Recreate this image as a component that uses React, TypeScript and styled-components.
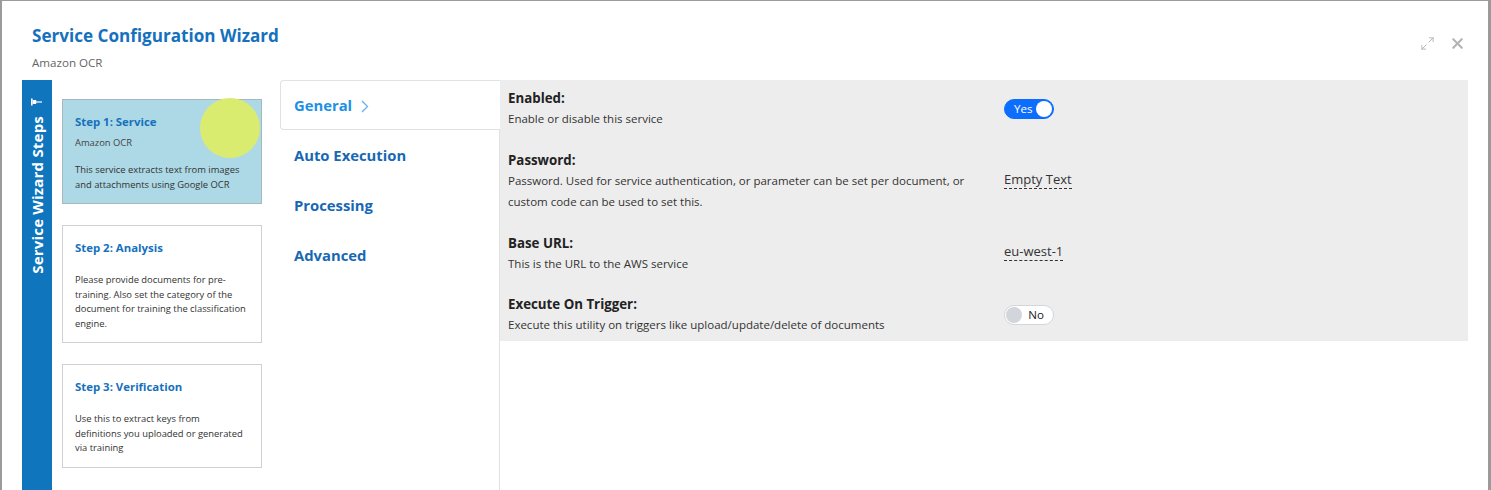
import React from "react";
import styled, { createGlobalStyle } from "styled-components";
import { Maximize2, X } from "lucide-react";

const GlobalStyle = createGlobalStyle`
    html, body {
        margin: 0;
        padding: 0;
        background: #9b9b9b;
    }
    body {
        font-family: "Open Sans", "Noto Sans", sans-serif;
        color: #333;
    }
`;

const Backdrop = styled.div`
    height: 490px;
    padding: 1px 3px 0 2px;
    box-sizing: border-box;
    overflow: hidden;
`;

const Modal = styled.div`
    position: relative;
    background: #fff;
    height: 100%;
    display: flex;
    flex-direction: column;
`;

const Header = styled.div`
    padding: 22px 30px 0;
    height: 79px;
    box-sizing: border-box;
`;

const Title = styled.h1`
    margin: 0;
    font-size: 17.1px;
    line-height: 26px;
    font-weight: 700;
    color: #1571bd;
`;

const Subtitle = styled.div`
    margin-top: 6px;
    font-size: 11.6px;
    line-height: 16px;
    color: #666;
`;

const HeaderTools = styled.div`
    position: absolute;
    top: 34px;
    right: 22px;
    display: flex;
    align-items: center;
    gap: 14px;
    color: #b4b4b4;
`;

const Body = styled.div`
    flex: 1;
    display: flex;
    padding-left: 20px;
    padding-right: 20px;
    min-height: 0;
`;

const StepsBar = styled.div`
    width: 30px;
    background: #0f75bc;
    display: flex;
    flex-direction: column;
    align-items: center;
    padding-top: 18px;
    gap: 10px;
    box-sizing: border-box;
`;

const StepsBarLabel = styled.div`
    writing-mode: vertical-rl;
    transform: rotate(180deg);
    color: #fff;
    font-weight: 700;
    font-size: 15px;
    letter-spacing: 0.2px;
`;

const StepsList = styled.div`
    width: 200px;
    margin-left: 10px;
    margin-right: 18px;
    padding-top: 19px;
    display: flex;
    flex-direction: column;
    gap: 21px;
`;

const StepCard = styled.div<{ $active?: boolean }>`
    position: relative;
    border: 1px solid ${(p) => (p.$active ? "#a9b8c0" : "#d0d0d0")};
    background: ${(p) => (p.$active ? "#add8e6" : "#fff")};
    padding: 14px 14px 11px 12px;
`;

const ClickMark = styled.div`
    position: absolute;
    left: 137px;
    top: -2px;
    width: 60px;
    height: 60px;
    border-radius: 50%;
    background: #d9ec70;
`;

const StepTitle = styled.div`
    position: relative;
    font-size: 11.4px;
    line-height: 16px;
    font-weight: 700;
    color: #1571bd;
`;

const StepSub = styled.div`
    position: relative;
    margin-top: 6px;
    font-size: 9.4px;
    line-height: 14px;
    color: #444;
`;

const StepText = styled.div<{ $gap: number }>`
    position: relative;
    margin-top: ${(p) => p.$gap}px;
    font-size: 9.4px;
    line-height: 14.5px;
    color: #333;
`;

const Tabs = styled.div`
    width: 220px;
    border-right: 1px solid #e2e2e2;
    box-sizing: border-box;
    display: flex;
    flex-direction: column;
`;

const Tab = styled.div<{ $active?: boolean }>`
    height: 50px;
    display: flex;
    align-items: center;
    gap: 9px;
    padding-left: 13px;
    box-sizing: border-box;
    font-size: 14.8px;
    font-weight: 700;
    color: ${(p) => (p.$active ? "#2090e6" : "#1768b4")};
    border: 1px solid ${(p) => (p.$active ? "#dfe1e5" : "transparent")};
    border-right: none;
    border-radius: 4px 0 0 4px;
    background: #fff;
    margin-right: ${(p) => (p.$active ? "-1px" : "0")};
`;

const Chevron = styled.svg`
    width: 8px;
    height: 13px;
    margin-top: 2px;
`;

const SettingsPanel = styled.div`
    flex: 1;
    align-self: flex-start;
    background: #ededed;
    padding: 8px 0 5px 8px;
    display: flex;
    flex-direction: column;
    gap: 20px;
`;

const SettingRow = styled.div`
    display: grid;
    grid-template-columns: 476px 1fr;
    column-gap: 20px;
    align-items: center;
`;

const SettingLabel = styled.div`
    font-size: 13.3px;
    line-height: 20px;
    font-weight: 700;
    color: #222;
`;

const SettingHelp = styled.div`
    font-size: 11.5px;
    line-height: 21.5px;
    color: #333;
`;

const Toggle = styled.div<{ $on: boolean }>`
    width: 50px;
    height: 20px;
    box-sizing: border-box;
    border-radius: 10px;
    display: flex;
    align-items: center;
    flex-direction: ${(p) => (p.$on ? "row" : "row-reverse")};
    justify-content: space-between;
    padding: ${(p) => (p.$on ? "0 1px 0 9px" : "0 9px 0 1px")};
    background: ${(p) => (p.$on ? "#0d6efd" : "#fff")};
    border: 1px solid ${(p) => (p.$on ? "#0d6efd" : "#d3d6da")};
    color: ${(p) => (p.$on ? "#fff" : "#222")};
    font-size: 11.6px;
`;

const Knob = styled.span<{ $on: boolean }>`
    width: 16px;
    height: 16px;
    border-radius: 50%;
    background: ${(p) => (p.$on ? "#fff" : "#d2d5db")};
`;

const InlineValue = styled.span`
    justify-self: start;
    font-size: 13px;
    line-height: 18px;
    color: #333;
    border-bottom: 1px dashed #333;
    margin-top: -4px;
`;

const Pin = () => (
    <svg width="12" height="8" viewBox="0 0 12 8">
        <rect x="0" y="0.5" width="1.6" height="7" fill="#fff" />
        <rect x="1.6" y="2" width="3.6" height="4" fill="#fff" />
        <rect x="5" y="3.4" width="6" height="1.2" fill="#fff" />
    </svg>
);

type Setting = {
    label: string;
    help: string;
    control: React.ReactNode;
};

const settings: Setting[] = [
    {
        label: "Enabled:",
        help: "Enable or disable this service",
        control: (
            <Toggle $on>
                Yes
                <Knob $on />
            </Toggle>
        ),
    },
    {
        label: "Password:",
        help: "Password. Used for service authentication, or parameter can be set per document, or custom code can be used to set this.",
        control: <InlineValue>Empty Text</InlineValue>,
    },
    {
        label: "Base URL:",
        help: "This is the URL to the AWS service",
        control: <InlineValue>eu-west-1</InlineValue>,
    },
    {
        label: "Execute On Trigger:",
        help: "Execute this utility on triggers like upload/update/delete of documents",
        control: (
            <Toggle $on={false}>
                No
                <Knob $on={false} />
            </Toggle>
        ),
    },
];

const steps = [
    {
        title: "Step 1: Service",
        sub: "Amazon OCR",
        text: "This service extracts text from images and attachments using Google OCR",
        active: true,
    },
    {
        title: "Step 2: Analysis",
        text: "Please provide documents for pre-training. Also set the category of the document for training the classification engine.",
    },
    {
        title: "Step 3: Verification",
        text: "Use this to extract keys from definitions you uploaded or generated via training",
    },
];

const tabs = ["General", "Auto Execution", "Processing", "Advanced"];

export default function App() {
    return (
        <>
            <GlobalStyle />
            <Backdrop>
                <Modal>
                    <Header>
                        <Title>Service Configuration Wizard</Title>
                        <Subtitle>Amazon OCR</Subtitle>
                    </Header>
                    <HeaderTools>
                        <Maximize2 size={15} strokeWidth={1.5} />
                        <X size={17} strokeWidth={3} />
                    </HeaderTools>
                    <Body>
                        <StepsBar>
                            <Pin />
                            <StepsBarLabel>Service Wizard Steps</StepsBarLabel>
                        </StepsBar>
                        <StepsList>
                            {steps.map((s) => (
                                <StepCard key={s.title} $active={s.active}>
                                    {s.active && <ClickMark />}
                                    <StepTitle>{s.title}</StepTitle>
                                    {s.sub && <StepSub>{s.sub}</StepSub>}
                                    <StepText $gap={s.sub ? 13 : 17}>{s.text}</StepText>
                                </StepCard>
                            ))}
                        </StepsList>
                        <Tabs>
                            {tabs.map((t, i) => (
                                <Tab key={t} $active={i === 0}>
                                    {t}
                                    {i === 0 && (
                                        <Chevron viewBox="0 0 8 13">
                                            <path d="M1 1l5.5 5.5L1 12" fill="none" stroke="#6ab0ee" strokeWidth="1.3" />
                                        </Chevron>
                                    )}
                                </Tab>
                            ))}
                        </Tabs>
                        <SettingsPanel>
                            {settings.map((s) => (
                                <SettingRow key={s.label}>
                                    <div>
                                        <SettingLabel>{s.label}</SettingLabel>
                                        <SettingHelp>{s.help}</SettingHelp>
                                    </div>
                                    {s.control}
                                </SettingRow>
                            ))}
                        </SettingsPanel>
                    </Body>
                </Modal>
            </Backdrop>
        </>
    );
}
